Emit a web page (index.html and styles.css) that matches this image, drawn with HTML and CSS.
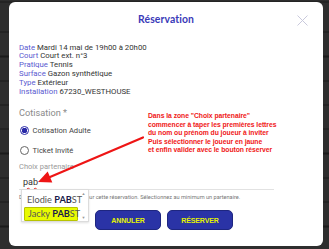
FILE: index.html
```html
<!DOCTYPE html>
<html lang="fr">
<head>
<meta charset="utf-8">
<title>Réservation</title>
<link rel="stylesheet" href="styles.css">
</head>
<body>
<div class="modal">
  <header class="head">
    <h1 class="title">Réservation</h1>
    <svg class="close" width="11" height="11" viewBox="0 0 11 11"><path d="M0.5 0.5 L10.5 10.5 M10.5 0.5 L0.5 10.5" stroke="#c9c9dc" stroke-width="1" fill="none"/></svg>
  </header>
  <div class="details">
    <div class="line"><span class="lbl">Date</span> <span class="val">Mardi 14 mai de 19h00 à 20h00</span></div>
    <div class="line"><span class="lbl">Court</span> <span class="val">Court ext. n°3</span></div>
    <div class="line"><span class="lbl">Pratique</span> <span class="val">Tennis</span></div>
    <div class="line"><span class="lbl">Surface</span> <span class="val">Gazon synthétique</span></div>
    <div class="line"><span class="lbl">Type</span> <span class="val">Extérieur</span></div>
    <div class="line"><span class="lbl">Installation</span> <span class="val">67230_WESTHOUSE</span></div>
  </div>
  <div class="section-label">Cotisation *</div>
  <div class="radio checked"><span class="dot"></span><span>Cotisation Adulte</span></div>
  <div class="radio"><span class="dot"></span><span>Ticket Invité</span></div>
  <div class="field-label">Choix partenaire</div>
  <div class="input"><span class="typed">pab</span></div>
  <div class="helper">Désignez vos partenaires pour cette réservation. Sélectionnez au minimum un partenaire.</div>
  <div class="actions">
    <button class="btn">ANNULER</button>
    <button class="btn">RÉSERVER</button>
  </div>

  <div class="menu">
    <div class="opt">Elodie <b>PAB</b>ST</div>
    <div class="opt active">Jacky <b>PAB</b>ST</div>
    <div class="scroll"><span>▲</span><span>▼</span></div>
  </div>

  <div class="note">Dans la zone "Choix partenaire"<br>commencer à taper les premières lettres<br>du nom ou prénom du joueur à inviter<br>Puis sélectionner le joueur en jaune<br>et enfin valider avec le bouton réserver</div>

  <svg class="arrow" width="314" height="244" viewBox="0 0 314 244">
    <line x1="134" y1="135.5" x2="41" y2="175" stroke="#ee1515" stroke-width="2.2" stroke-linecap="round"/>
    <polygon points="29,180 43.3,180.5 38.7,169.5" fill="#ee1515"/>
  </svg>
</div>
</body>
</html>
```
FILE: styles.css
```css
html, body {
  margin: 0;
}
body {
  width: 329px;
  height: 249px;
  box-sizing: border-box;
  padding: 2px 6px 3px 9px;
  display: flex;
  background-color: #2d2d2d;
  background-image: repeating-linear-gradient(to bottom, #2e2e2e 0, #2e2e2e 23px, #1b1b1b 23px, #1b1b1b 24.3px);
  background-position: 0 8.5px;
  overflow: hidden;
  font-family: Roboto, "Liberation Sans", sans-serif;
}
.modal {
  position: relative;
  width: 314px;
  height: 244px;
  background: #fff;
  border-radius: 6px;
  box-sizing: border-box;
  padding: 0 10px;
}
.head {
  height: 34px;
  display: flex;
  align-items: center;
  justify-content: center;
}
.title {
  margin: 0;
  font-family: Lato, "Open Sans", sans-serif;
  font-weight: 700;
  font-size: 10.4px;
  color: #3a3ab8;
  letter-spacing: 0.1px;
}
.close {
  position: absolute;
  right: 15px;
  top: 13px;
}
.details {
  margin-top: 7.6px;
  font-size: 7.8px;
  line-height: 8.8px;
}
.lbl { color: #5a5ad0; }
.val { color: #333; }
.section-label {
  margin-top: 10.6px;
  font-size: 9.2px;
  line-height: 12px;
  color: #8a8a8a;
}
.radio {
  display: flex;
  align-items: center;
  gap: 4px;
  height: 12px;
  font-size: 7.6px;
  color: #444;
  margin-top: 6px;
}
.radio + .radio { margin-top: 7.5px; }
.dot {
  width: 7px;
  height: 7px;
  border: 1px solid #666;
  border-radius: 50%;
  box-sizing: content-box;
  flex: none;
  margin-left: 0.5px;
}
.radio.checked .dot {
  border-color: #2a2aa8;
  background: radial-gradient(circle, #2a2aa8 0 2.6px, #fff 3px);
}
.field-label {
  margin-top: 5.5px;
  font-size: 7.5px;
  line-height: 10px;
  color: #9a9a9a;
}
.input {
  margin-top: 4px;
  width: 251px;
  height: 13px;
  border-bottom: 1px solid #e2e2e2;
  padding-left: 4px;
  font-size: 9px;
  line-height: 12px;
  color: #333;
}
.typed {
  text-decoration: underline wavy #e03030;
  text-decoration-thickness: 0.8px;
  text-underline-offset: 1.5px;
}
.helper {
  margin-top: 4px;
  font-size: 5.6px;
  line-height: 7px;
  color: #777;
  white-space: nowrap;
}
.actions {
  display: flex;
  gap: 6px;
  margin-top: 9.5px;
  padding-left: 76px;
}
.btn {
  width: 66px;
  height: 20px;
  border: 1px solid #1e2680;
  border-radius: 5px;
  background: #2a33a6;
  color: #e4f200;
  font-family: "Liberation Sans", Arial, sans-serif;
  font-weight: 700;
  font-size: 7px;
  letter-spacing: -0.1px;
  padding: 0;
}
.menu {
  position: absolute;
  left: 12px;
  top: 187px;
  width: 68px;
  height: 33px;
  box-sizing: border-box;
  background: #fff;
  border: 1px solid #dcdcdc;
  box-shadow: 0 1px 2px rgba(0,0,0,0.12);
  padding: 3px 10px 0 2px;
  font-family: Lato, Roboto, sans-serif;
  font-size: 9.2px;
  color: #555;
}
.opt {
  height: 13px;
  line-height: 13px;
  padding-left: 3px;
  white-space: nowrap;
}
.opt b { color: #1a1a4a; font-weight: 700; }
.opt.active {
  margin-top: 1px;
  background: #e8fb00;
  border: 1px solid #b8c400;
  border-radius: 1px;
  height: 12px;
  line-height: 12px;
}
.scroll {
  position: absolute;
  right: 1px;
  top: 1px;
  bottom: 1px;
  width: 7px;
  display: flex;
  flex-direction: column;
  justify-content: space-between;
  align-items: center;
  font-size: 4px;
  color: #999;
}
.note {
  position: absolute;
  left: 139px;
  top: 110px;
  font-family: "Liberation Sans", Arial, sans-serif;
  font-weight: 700;
  font-size: 6.8px;
  line-height: 8.5px;
  letter-spacing: -0.05px;
  color: #f01818;
  white-space: nowrap;
}
.arrow {
  position: absolute;
  left: 0;
  top: 0;
  pointer-events: none;
}
```
